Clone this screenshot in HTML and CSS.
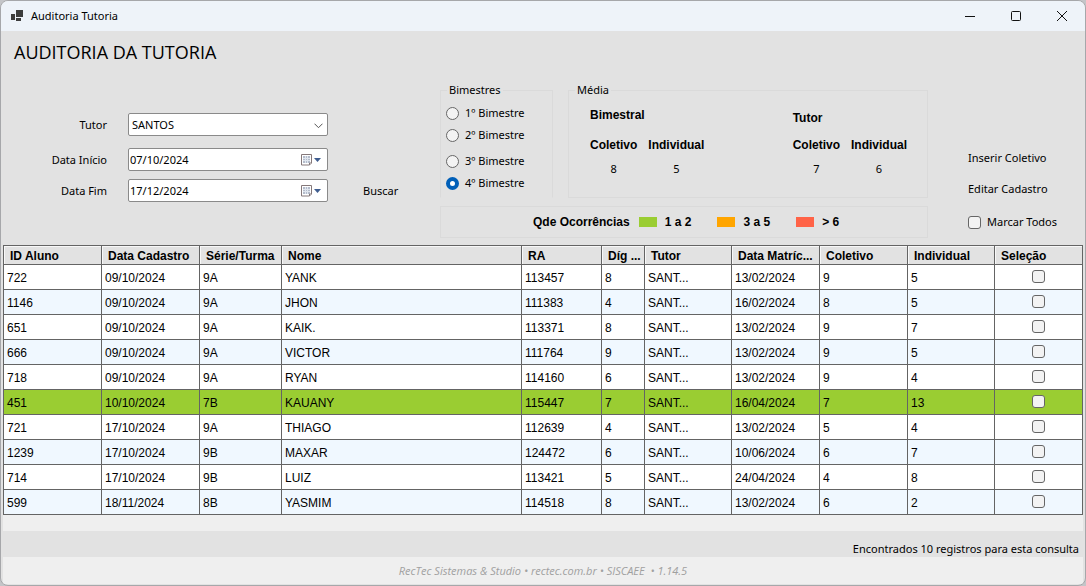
FILE: index.html
```html
<!DOCTYPE html>
<html lang="pt-BR">
<head>
<meta charset="utf-8">
<title>Auditoria Tutoria</title>
<link rel="stylesheet" href="styles.css">
</head>
<body>
<div class="window">
  <header class="titlebar">
    <svg class="app-icon" width="13" height="12" viewBox="0 0 13 12" shape-rendering="crispEdges" aria-hidden="true"><path fill="#3c3c3c" d="M5 0h7v7H5zM0 4h4v6H0zM5 8h5v3H5z"/></svg>
    <span class="titlebar-text">Auditoria Tutoria</span>
    <button class="win-btn" aria-label="Minimizar"><svg width="12" height="12" viewBox="0 0 12 12"><path d="M1 6.5h10" stroke="#111" fill="none"/></svg></button>
    <button class="win-btn" aria-label="Maximizar"><svg width="12" height="12" viewBox="0 0 12 12"><rect x="1.5" y="1.5" width="9" height="9" rx="1" stroke="#111" fill="none"/></svg></button>
    <button class="win-btn" aria-label="Fechar"><svg width="12" height="12" viewBox="0 0 12 12"><path d="M1 1l10 10M11 1L1 11" stroke="#111" fill="none"/></svg></button>
  </header>

  <main class="content">
    <h1 class="page-title">AUDITORIA DA TUTORIA</h1>

    <form class="panel">
      <div class="filters">
        <label class="filter-label" for="tutor">Tutor</label>
        <div class="field field-tutor">
          <select id="tutor" class="field-input"><option>SANTOS</option></select>
          <svg class="chevron" width="9" height="6" viewBox="0 0 9 6" aria-hidden="true"><path d="M.5 .7l4 4 4-4" stroke="#555" fill="none"/></svg>
        </div>

        <label class="filter-label row-start" for="inicio">Data Início</label>
        <div class="field row-start">
          <input id="inicio" class="field-input" type="text" value="07/10/2024">
          <button type="button" class="calendar" aria-label="Abrir calendário"><svg width="22" height="14" viewBox="0 0 22 14"><path d="M1.500 1.500h10v8.500l-2 2h-8z" fill="#fff" stroke="#85787a"/><path d="M3 3h7v7H3z" fill="#b4bccb"/><path d="M3 5.500h7M3 7.500h7M5.500 3v7M7.500 3v7" stroke="#dfe5ee"/><path d="M9.500 12v-2h2" fill="#fff" stroke="#85787a"/><path d="M14 5h7l-3.500 4z" fill="#3f5d8f"/></svg></button>
        </div>

        <label class="filter-label" for="fim">Data Fim</label>
        <div class="field">
          <input id="fim" class="field-input" type="text" value="17/12/2024">
          <button type="button" class="calendar" aria-label="Abrir calendário"><svg width="22" height="14" viewBox="0 0 22 14"><path d="M1.500 1.500h10v8.500l-2 2h-8z" fill="#fff" stroke="#85787a"/><path d="M3 3h7v7H3z" fill="#b4bccb"/><path d="M3 5.500h7M3 7.500h7M5.500 3v7M7.500 3v7" stroke="#dfe5ee"/><path d="M9.500 12v-2h2" fill="#fff" stroke="#85787a"/><path d="M14 5h7l-3.500 4z" fill="#3f5d8f"/></svg></button>
        </div>
        <button type="button" class="flat-btn search">Buscar</button>
      </div>

      <div class="summary">
        <div class="groups">
          <fieldset class="group terms">
            <legend>Bimestres</legend>
            <label class="radio"><input type="radio" name="bimestre">1º Bimestre</label>
            <label class="radio"><input type="radio" name="bimestre">2º Bimestre</label>
            <label class="radio radio-gap"><input type="radio" name="bimestre">3º Bimestre</label>
            <label class="radio"><input type="radio" name="bimestre" checked>4º Bimestre</label>
          </fieldset>
          <fieldset class="group averages">
            <legend>Média</legend>
            <div class="average">
              <strong class="average-title">Bimestral</strong>
              <strong>Coletivo</strong><strong>Individual</strong>
              <span class="value">8</span><span class="value">5</span>
            </div>
            <div class="average">
              <strong class="average-title title-low">Tutor</strong>
              <strong>Coletivo</strong><strong>Individual</strong>
              <span class="value">7</span><span class="value">6</span>
            </div>
          </fieldset>
        </div>
        <div class="occurrences">
          <strong>Qde Ocorrências</strong>
          <span class="key"><i class="swatch low"></i>1 a 2</span>
          <span class="key"><i class="swatch mid"></i>3 a 5</span>
          <span class="key"><i class="swatch high"></i>&gt; 6</span>
        </div>
      </div>

      <div class="actions">
        <button type="button" class="flat-btn">Inserir Coletivo</button>
        <button type="button" class="flat-btn">Editar Cadastro</button>
        <label class="mark-all"><input type="checkbox" class="check">Marcar Todos</label>
      </div>
    </form>

    <div class="grid-area">
      <table class="records">
        <colgroup><col class="w-l"><col class="w-l"><col class="w-m"><col><col class="w-ra"><col class="w-s"><col class="w-t"><col class="w-d"><col class="w-d"><col class="w-t"><col class="w-d"></colgroup>
        <thead><tr><th>ID Aluno</th><th>Data Cadastro</th><th>Série/Turma</th><th>Nome</th><th>RA</th><th>Díg ...</th><th>Tutor</th><th>Data Matríc...</th><th>Coletivo</th><th>Individual</th><th>Seleção</th></tr></thead>
        <tbody>
          <tr><td>722</td><td>09/10/2024</td><td>9A</td><td>YANK</td><td>113457</td><td>8</td><td>SANT...</td><td>13/02/2024</td><td>9</td><td>5</td><td class="pick"><input type="checkbox" class="check" aria-label="Selecionar 722"></td></tr>
          <tr><td>1146</td><td>09/10/2024</td><td>9A</td><td>JHON</td><td>111383</td><td>4</td><td>SANT...</td><td>16/02/2024</td><td>8</td><td>5</td><td class="pick"><input type="checkbox" class="check" aria-label="Selecionar 1146"></td></tr>
          <tr><td>651</td><td>09/10/2024</td><td>9A</td><td>KAIK.</td><td>113371</td><td>8</td><td>SANT...</td><td>13/02/2024</td><td>9</td><td>7</td><td class="pick"><input type="checkbox" class="check" aria-label="Selecionar 651"></td></tr>
          <tr><td>666</td><td>09/10/2024</td><td>9A</td><td>VICTOR</td><td>111764</td><td>9</td><td>SANT...</td><td>13/02/2024</td><td>9</td><td>5</td><td class="pick"><input type="checkbox" class="check" aria-label="Selecionar 666"></td></tr>
          <tr><td>718</td><td>09/10/2024</td><td>9A</td><td>RYAN</td><td>114160</td><td>6</td><td>SANT...</td><td>13/02/2024</td><td>9</td><td>4</td><td class="pick"><input type="checkbox" class="check" aria-label="Selecionar 718"></td></tr>
          <tr class="flagged"><td>451</td><td>10/10/2024</td><td>7B</td><td>KAUANY</td><td>115447</td><td>7</td><td>SANT...</td><td>16/04/2024</td><td>7</td><td>13</td><td class="pick"><input type="checkbox" class="check" aria-label="Selecionar 451"></td></tr>
          <tr><td>721</td><td>17/10/2024</td><td>9A</td><td>THIAGO</td><td>112639</td><td>4</td><td>SANT...</td><td>13/02/2024</td><td>5</td><td>4</td><td class="pick"><input type="checkbox" class="check" aria-label="Selecionar 721"></td></tr>
          <tr><td>1239</td><td>17/10/2024</td><td>9B</td><td>MAXAR</td><td>124472</td><td>6</td><td>SANT...</td><td>10/06/2024</td><td>6</td><td>7</td><td class="pick"><input type="checkbox" class="check" aria-label="Selecionar 1239"></td></tr>
          <tr><td>714</td><td>17/10/2024</td><td>9B</td><td>LUIZ</td><td>113421</td><td>5</td><td>SANT...</td><td>24/04/2024</td><td>4</td><td>8</td><td class="pick"><input type="checkbox" class="check" aria-label="Selecionar 714"></td></tr>
          <tr><td>599</td><td>18/11/2024</td><td>8B</td><td>YASMIM</td><td>114518</td><td>8</td><td>SANT...</td><td>13/02/2024</td><td>6</td><td>2</td><td class="pick"><input type="checkbox" class="check" aria-label="Selecionar 599"></td></tr>
        </tbody>
      </table>
    </div>

    <p class="result">Encontrados 10 registros para esta consulta</p>
    <footer class="status">RecTec Sistemas &amp; Studio • rectec.com.br • SISCAEE &nbsp;• 1.14.5</footer>
  </main>
</div>
</body>
</html>
```

FILE: styles.css
```css
* { box-sizing: border-box; }

body {
  margin: 0;
  background: #c4c5c8;
  color: #000;
  font: 11px/16px "Noto Sans", "Open Sans", sans-serif;
}

button, input, select { font: inherit; color: inherit; }

.window {
  display: flex;
  flex-direction: column;
  min-height: 100vh;
  border: 1px solid #a6a7aa;
  border-radius: 8px;
  background: #e2e2e2;
  overflow: hidden;
}

.titlebar {
  display: flex;
  align-items: center;
  height: 30px;
  padding-left: 10px;
  background: #eef3f9;
}
.titlebar-text { flex: 1; padding-left: 7px; }
.win-btn {
  display: grid;
  place-items: center;
  width: 46px;
  height: 30px;
  padding: 0;
  border: 0;
  background: none;
}

.content {
  flex: 1;
  display: flex;
  flex-direction: column;
  padding: 0 2px 1px;
}
.page-title {
  margin: 8px 0 0 11px;
  font-family: "Open Sans", "Noto Sans", sans-serif;
  font-size: 18px;
  line-height: 26px;
  font-weight: 400;
}

.panel {
  display: grid;
  grid-template-columns: minmax(0, 437fr) minmax(0, 488fr) minmax(0, 155fr);
  height: 180px;
}

.filters {
  display: grid;
  grid-template-columns: 104px 200px auto;
  column-gap: 21px;
  row-gap: 8px;
  align-content: start;
  align-items: center;
  padding-top: 48px;
}
.filter-label { grid-column: 1; text-align: right; }
.row-start { margin-top: 4px; }
.field {
  position: relative;
  display: flex;
  align-items: center;
  height: 23px;
  border: 1px solid #8a8a8a;
  border-radius: 2px;
  background: #fff;
}
.field-input {
  flex: 1;
  min-width: 0;
  height: 21px;
  padding: 0 1px;
  border: 0;
  background: none;
  appearance: none;
}
.field-tutor .field-input { padding: 0 3px; }
.chevron { position: absolute; right: 4px; top: 9px; pointer-events: none; }
.calendar {
  display: flex;
  padding: 0 5px 0 0;
  border: 0;
  background: none;
}
.flat-btn {
  padding: 0;
  border: 0;
  background: none;
  text-align: left;
}
.search { margin-left: 14px; }

.groups { display: flex; gap: 15px; padding-top: 17px; }
.group {
  min-width: 0;
  height: 116px;
  margin: 0;
  border: 1px solid #dadada;
}
.group legend { padding: 0 2px; }
.terms {
  flex: 0 0 113px;
  padding: 4px 0 0 5px;
  border-bottom-color: transparent;
}
.terms legend { margin-left: 1px; }
.radio { display: flex; align-items: center; gap: 6px; height: 22px; }
.radio-gap { margin-top: 4px; }
.radio input {
  appearance: none;
  width: 13px;
  height: 13px;
  margin: 0;
  border: 1px solid #666;
  border-radius: 50%;
  background: #f3f3f3;
}
.radio input:checked { border: 4px solid #005fb8; background: #fff; }

.averages {
  flex: 1;
  display: flex;
  justify-content: space-between;
  padding: 9px 20px 0 21px;
}
.averages legend { margin-left: -15px; }
.average, .occurrences, .records { font-family: "Liberation Sans", Arial, sans-serif; font-size: 12px; }
.average {
  display: grid;
  grid-template-columns: auto auto;
  grid-template-rows: 30px 24px 16px;
  column-gap: 11px;
  align-content: start;
}
.average-title { grid-column: 1 / -1; }
.title-low { padding-top: 3px; }
.value { text-align: center; font-family: "Noto Sans", "Open Sans", sans-serif; font-size: 11px; }

.occurrences {
  display: flex;
  align-items: center;
  height: 32px;
  margin-top: 8px;
  padding-left: 92px;
  border: 1px solid #dadada;
  font-weight: 700;
}
.key { display: flex; align-items: center; }
.key + .key { margin-left: 26px; }
.swatch { width: 18px; height: 10px; margin: 0 8px 0 9px; }
.key + .key .swatch { margin-left: 0; }
.low { background: #9acd32; }
.mid { background: #ffa500; }
.high { background: #ff6347; }

.actions {
  display: flex;
  flex-direction: column;
  align-items: flex-start;
  gap: 15px;
  padding: 85px 0 0 40px;
  white-space: nowrap;
}
.mark-all { display: flex; align-items: center; gap: 6px; margin-top: 2px; }
.check {
  appearance: none;
  width: 13px;
  height: 13px;
  margin: 0;
  border: 1px solid #666;
  border-radius: 3px;
  background: #f3f3f3;
}

.grid-area { flex: 1; background: #efefef; }
.records {
  width: 100%;
  table-layout: fixed;
  border-collapse: collapse;
}
.w-l { width: 98px; }
.w-m { width: 82px; }
.w-ra { width: 80px; }
.w-s { width: 43px; }
.w-t { width: 87px; }
.w-d { width: 88px; }
.records th {
  height: 19px;
  padding: 2px 0 0 6px;
  border: 1px solid #646464;
  background: #e2e2e2;
  box-shadow: inset 1px 1px #f8f8f8;
  text-align: left;
  white-space: nowrap;
  line-height: 16px;
}
.records td {
  height: 25px;
  padding: 2px 3px 0;
  border: 1px solid #646464;
  white-space: nowrap;
}
.records tbody tr { background: #fff; }
.records tbody tr:nth-child(even) { background: #f0f8ff; }
.records tbody tr.flagged { background: #9acd32; }
.records .pick { padding: 0 3px 2px; text-align: center; line-height: 0; }
.pick .check { display: inline-block; vertical-align: middle; }

.result {
  margin: 0;
  padding: 10px 4px 0 0;
  text-align: right;
}
.status {
  height: 27px;
  background: #efefef;
  color: #a0a0a0;
  font-family: "Open Sans", "Noto Sans", sans-serif;
  line-height: 27px;
  font-style: italic;
  text-align: center;
}
```
